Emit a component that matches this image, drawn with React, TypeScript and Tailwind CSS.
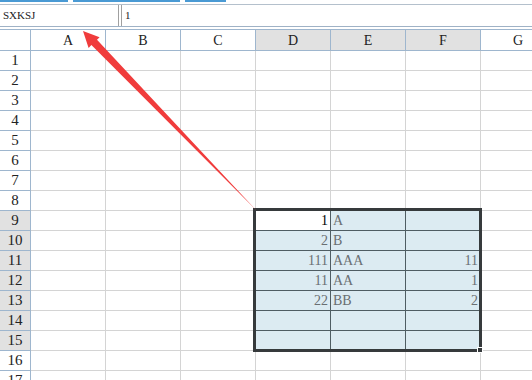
import React from 'react';

const cols = ['A', 'B', 'C', 'D', 'E', 'F', 'G'];
const rows = Array.from({ length: 17 }, (_, i) => i + 1);

// values in the selected block D9:F15, keyed by row number
const data: Record<number, [string, string, string]> = {
  9: ['1', 'A', ''],
  10: ['2', 'B', ''],
  11: ['111', 'AAA', '11'],
  12: ['11', 'AA', '1'],
  13: ['22', 'BB', '2'],
};

const selCols = ['D', 'E', 'F'];
const isSelRow = (r: number) => r >= 9 && r <= 15;

const Arrow = () => (
  <svg className="absolute inset-0 pointer-events-none" width="532" height="380" viewBox="0 0 532 380">
    <polygon
      points="83,31 99.6,37.2 97.0,39.8 256.5,210.5 255.5,209.5 91.4,45.1 88.6,47.9"
      fill="#f03c3c"
    />
  </svg>
);

const Cell: React.FC<{ row: number; col: string }> = ({ row, col }) => {
  const ci = selCols.indexOf(col);
  const inSel = isSelRow(row) && ci >= 0;
  const active = row === 9 && col === 'D';
  const val = inSel && data[row] ? data[row][ci] : '';
  const right = ci === 0 || ci === 2;
  let cls = 'w-[75px] shrink-0 h-full border-r border-b flex items-center px-[2px] text-[14px] leading-none ';
  if (inSel) {
    cls += 'border-[#4f5d63] ' + (active ? 'bg-white text-black ' : 'bg-[#dcebf2] text-[#6a6f72] ');
  } else {
    cls += 'border-[#d4d4d4] ';
  }
  cls += right ? 'justify-end' : 'justify-start';
  return <div className={cls}>{val}</div>;
};

export default function App() {
  return (
    <div
      className="relative w-[532px] h-[380px] overflow-hidden bg-white"
      style={{ fontFamily: '"Liberation Serif", "DejaVu Serif", serif' }}
    >
      {/* tab strip */}
      <div className="h-[5px] border-b border-[#b4c0cc] flex gap-[5px] items-start">
        <div className="w-[68px] h-[2px] bg-[#4a9ad4]" />
        <div className="w-[107px] h-[2px] bg-[#4a9ad4]" />
        <div className="w-[41px] h-[2px] bg-[#4a9ad4]" />
      </div>

      {/* formula bar */}
      <div className="h-[22px] flex items-stretch border-b border-[#9fb2c6]">
        <div className="w-[119px] border-r border-[#a0a0a0] flex items-center pl-[3px] text-[11px] text-[#222]">
          SXKSJ
        </div>
        <div className="w-[2px]" />
        <div className="border-l border-[#a0a0a0] flex items-center pl-[3px] text-[11px] text-[#222]">1</div>
      </div>

      <div className="h-[2px]" />

      {/* column header */}
      <div className="h-[22px] flex border-t border-b border-[#9eb6ce] text-[14px] text-[#222]">
        <div className="w-[31px] shrink-0 border-r border-[#9eb6ce]" />
        {cols.map((c) => (
          <div
            key={c}
            className={
              'w-[75px] shrink-0 border-r border-[#9eb6ce] flex items-center justify-center ' +
              (selCols.includes(c) ? 'bg-[#e1e1e1]' : 'bg-white')
            }
          >
            {c}
          </div>
        ))}
      </div>

      {/* grid rows */}
      {rows.map((r) => (
        <div key={r} className="h-[20px] flex">
          <div
            className={
              'w-[31px] shrink-0 border-r border-b border-[#9eb6ce] flex items-center justify-center text-[15px] text-[#222] ' +
              (isSelRow(r) ? 'bg-[#e1e1e1]' : 'bg-white')
            }
          >
            {r}
          </div>
          {cols.map((c) => (
            <Cell key={c} row={r} col={c} />
          ))}
        </div>
      ))}

      {/* selection outline and fill handle */}
      <div className="absolute left-[253px] top-[208px] w-[229px] h-[144px] border-[3px] border-[#363a3c] pointer-events-none" />
      <div className="absolute left-[477px] top-[347px] w-[6px] h-[6px] bg-[#363a3c] border border-white" />

      <Arrow />
    </div>
  );
}
